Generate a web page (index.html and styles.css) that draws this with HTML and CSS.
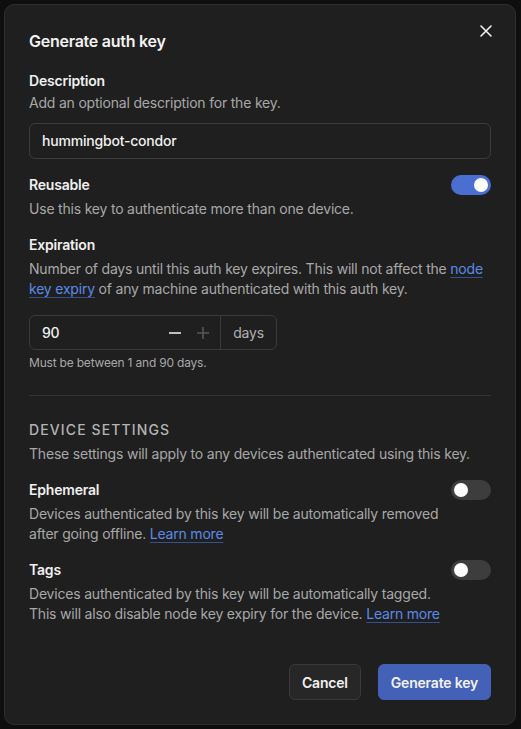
FILE: index.html
```html
<!DOCTYPE html>
<html lang="en">
<head>
<meta charset="utf-8">
<title>Generate auth key</title>
<link rel="stylesheet" href="styles.css">
</head>
<body>
<div class="dialog">
  <button class="close" aria-label="Close">
    <svg width="14" height="14" viewBox="0 0 14 14"><path d="M2 2 L12 12 M12 2 L2 12" stroke="#f2f2f2" stroke-width="1.6" stroke-linecap="round" fill="none"/></svg>
  </button>
  <h1 class="title">Generate auth key</h1>

  <section class="field desc-field">
    <div class="label">Description</div>
    <p class="help">Add an optional description for the key.</p>
    <div class="text-input">hummingbot-condor</div>
  </section>

  <section class="field toggle-field reusable">
    <div class="toggle-text">
      <div class="label">Reusable</div>
      <p class="help">Use this key to authenticate more than one device.</p>
    </div>
    <span class="toggle on"><span class="knob"></span></span>
  </section>

  <section class="field expiration">
    <div class="label">Expiration</div>
    <p class="help">Number of days until this auth key expires. This will not affect the <a class="link">node</a> <a class="link">key expiry</a> of any machine authenticated with this auth key.</p>
    <div class="number-group">
      <div class="number-input">
        <span class="num">90</span>
        <span class="steppers">
          <svg class="step" width="14" height="14" viewBox="0 0 14 14"><path d="M1 7 H13" stroke="#e6e6e6" stroke-width="1.6"/></svg>
          <svg class="step" width="14" height="14" viewBox="0 0 14 14"><path d="M1 7 H13 M7 1 V13" stroke="#555555" stroke-width="1.6"/></svg>
        </span>
      </div>
      <div class="addon">days</div>
    </div>
    <p class="hint">Must be between 1 and 90 days.</p>
  </section>

  <hr class="divider">

  <section class="field device">
    <div class="section-title">DEVICE SETTINGS</div>
    <p class="help">These settings will apply to any devices authenticated using this key.</p>
  </section>

  <section class="field toggle-field">
    <div class="toggle-text">
      <div class="label">Ephemeral</div>
      <p class="help">Devices authenticated by this key will be automatically removed after going offline. <a class="link">Learn more</a></p>
    </div>
    <span class="toggle"><span class="knob"></span></span>
  </section>

  <section class="field toggle-field">
    <div class="toggle-text">
      <div class="label">Tags</div>
      <p class="help">Devices authenticated by this key will be automatically tagged. This will also disable node key expiry for the device. <a class="link">Learn more</a></p>
    </div>
    <span class="toggle"><span class="knob"></span></span>
  </section>

  <div class="actions">
    <button class="btn secondary">Cancel</button>
    <button class="btn primary">Generate key</button>
  </div>
</div>
</body>
</html>
```

FILE: styles.css
```css
html, body {
  margin: 0;
  padding: 0;
  background: #0e0e0e;
}
body {
  padding: 4px;
  font-family: Inter, "Noto Sans", sans-serif;
  color: #ececec;
  font-size: 14px;
  line-height: 20px;
  letter-spacing: -0.2px;
}
.dialog {
  position: relative;
  box-sizing: border-box;
  width: 512px;
  height: 721px;
  background: #1f1f1f;
  border: 1px solid #2e2e2e;
  border-radius: 10px;
  padding: 24px;
  display: flex;
  flex-direction: column;
}
.close {
  position: absolute;
  top: 14px;
  right: 17px;
  width: 24px;
  height: 24px;
  padding: 0;
  border: none;
  background: transparent;
  display: flex;
  align-items: center;
  justify-content: center;
}
.title {
  margin: 0;
  font-size: 16px;
  font-weight: 600;
  line-height: 24px;
  letter-spacing: -0.25px;
  color: #f2f2f2;
}
.field { margin-top: 18px; }
.desc-field { margin-top: 18px; }
.label {
  font-weight: 600;
  color: #f0f0f0;
}
.help {
  margin: 2px 0 0;
  color: #a8a8a8;
}
.text-input {
  margin-top: 10px;
  height: 36px;
  box-sizing: border-box;
  border: 1px solid #3c3c3c;
  border-radius: 6px;
  padding: 0 12px;
  display: flex;
  align-items: center;
  font-weight: 500;
  color: #f0f0f0;
}
.toggle-field {
  display: flex;
  align-items: flex-start;
  gap: 8px;
  margin-top: 16px;
}
.toggle-field .help { margin-top: 4px; }
.toggle-text { flex: 1; }
.toggle {
  flex: none;
  width: 40px;
  height: 20px;
  border-radius: 10px;
  background: #3d3d3d;
  display: flex;
  align-items: center;
  padding: 0 3px;
  box-sizing: border-box;
}
.toggle.on {
  background: #4a6fd0;
  justify-content: flex-end;
}
.knob {
  width: 14px;
  height: 14px;
  border-radius: 50%;
  background: #ffffff;
}
.expiration { margin-top: 16px; }
.expiration .help { margin-top: 4px; }
.link {
  color: #5c8ae8;
  text-decoration: underline;
  text-decoration-color: #35508a;
  text-underline-offset: 3px;
}
.number-group {
  margin-top: 16px;
  display: flex;
  width: 248px;
  height: 35px;
  box-sizing: border-box;
  border: 1px solid #3a3a3a;
  border-radius: 6px;
}
.number-input {
  flex: 1;
  display: flex;
  align-items: center;
  padding: 0 10px 0 12px;
  border-right: 1px solid #3a3a3a;
}
.num { flex: 1; font-weight: 500; color: #f0f0f0; }
.steppers { display: flex; gap: 14px; align-items: center; }
.step { display: block; }
.addon {
  width: 55px;
  display: flex;
  align-items: center;
  justify-content: center;
  color: #b0b0b0;
}
.hint {
  margin: 5px 0 0;
  font-size: 12px;
  line-height: 16px;
  color: #a8a8a8;
}
.divider {
  margin: 24px 0 0;
  border: none;
  border-top: 1px solid #333333;
}
.device { margin-top: 24px; }
.section-title {
  font-weight: 500;
  letter-spacing: 0.08em;
  color: #b4b4b4;
}
.device .help { margin-top: 4px; }
.actions {
  margin-top: auto;
  display: flex;
  justify-content: flex-end;
  gap: 17px;
}
.btn {
  height: 36px;
  padding: 0 12px;
  border-radius: 6px;
  font-family: inherit;
  font-size: 14px;
  font-weight: 600;
  letter-spacing: -0.2px;
  color: #f2f2f2;
}
.btn.secondary {
  background: #272727;
  border: 1px solid #3a3a3a;
}
.btn.primary {
  background: #4361b6;
  border: 1px solid #4361b6;
}
```
